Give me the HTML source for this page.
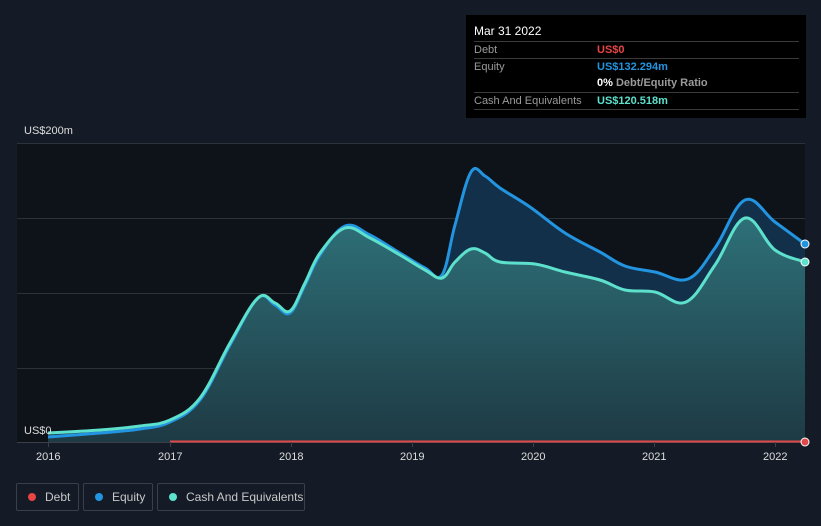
<!DOCTYPE html>
<html><head><meta charset="utf-8"><style>
body{margin:0;width:821px;height:526px;background:#151b26;font-family:"Liberation Sans",sans-serif;overflow:hidden;position:relative}
.tt{position:absolute;left:466px;top:15px;width:340px;height:103px;background:#000;}
.tt .h{position:absolute;left:8px;top:9px;color:#fff;font-size:12px}
.row{position:absolute;left:8px;width:325px;border-top:1px solid #3a3a3a;font-size:11px;color:#9a9a9a;height:16px;line-height:16px}
.row span{position:absolute;left:123px;font-weight:bold}
.leg{position:absolute;top:483px;height:26px;border:1px solid #3a3f48;border-radius:2px;color:#c8c8c8;font-size:12px;line-height:26px}
.leg i{position:absolute;left:11px;top:9px;width:8px;height:8px;border-radius:50%}
.ax{position:absolute;color:#ddd;font-size:11px}
</style></head><body>
<svg width="821" height="526" style="position:absolute;left:0;top:0">
<defs><linearGradient id="g" x1="0" y1="0" x2="0" y2="1"><stop offset="0" stop-color="#2e7078"/><stop offset="1" stop-color="#1e3a44"/></linearGradient></defs>
<rect x="17" y="143" width="788" height="299" fill="#0e1219"/>
<g stroke="#2d323a" stroke-width="1"><line x1="17" y1="143.5" x2="805" y2="143.5"/><line x1="17" y1="218.5" x2="805" y2="218.5"/><line x1="17" y1="293.5" x2="805" y2="293.5"/><line x1="17" y1="368.5" x2="805" y2="368.5"/></g>
<path id="ef" fill="#12304a"/>
<path id="cf" fill="url(#g)"/>
<path id="el" fill="none" stroke="#2394df" stroke-width="3" stroke-linejoin="round"/>
<path id="cl" fill="none" stroke="#5de0cc" stroke-width="3" stroke-linejoin="round"/>
<line x1="17" y1="442.5" x2="805" y2="442.5" stroke="#3a3f48"/>
<line x1="170" y1="441.5" x2="805" y2="441.5" stroke="#e04a4a" stroke-width="2"/>
<g stroke="#3a3f48"><line x1="48.5" y1="442" x2="48.5" y2="447"/><line x1="170.5" y1="442" x2="170.5" y2="447"/><line x1="291.5" y1="442" x2="291.5" y2="447"/><line x1="412.5" y1="442" x2="412.5" y2="447"/><line x1="533.5" y1="442" x2="533.5" y2="447"/><line x1="654.5" y1="442" x2="654.5" y2="447"/><line x1="775.5" y1="442" x2="775.5" y2="447"/></g>
<circle cx="805" cy="244" r="4" fill="#2394df" stroke="#fff" stroke-width="1"/>
<circle cx="805" cy="262" r="4" fill="#5de0cc" stroke="#fff" stroke-width="1"/>
<circle cx="805" cy="442" r="4" fill="#e04a4a" stroke="#fff" stroke-width="1"/>
</svg>
<script>
function sm(p){var d="M"+p[0][0]+","+p[0][1];for(var i=0;i<p.length-1;i++){var a=p[i-1]||p[i],b=p[i],c=p[i+1],e=p[i+2]||c;var t=0.18;d+=" C"+(b[0]+(c[0]-a[0])*t).toFixed(1)+","+(b[1]+(c[1]-a[1])*t).toFixed(1)+" "+(c[0]-(e[0]-b[0])*t).toFixed(1)+","+(c[1]-(e[1]-b[1])*t).toFixed(1)+" "+c[0]+","+c[1];}return d;}
var E=[[48,437],[100,433],[140,429],[170,422],[200,400],[230,345],[258,298],[275,305],[290,313],[305,285],[320,255],[345,226],[370,235],[400,253],[425,268],[442,275],[455,225],[471,172],[485,176],[500,188],[530,207],[565,233],[600,252],[625,266],[655,272],[688,279],[715,248],[745,200],[775,222],[805,244]];
var C=[[48,433],[100,430],[140,426],[170,420],[200,398],[230,343],[258,298],[275,303],[290,311],[305,283],[320,253],[345,228],[370,238],[400,255],[425,270],[442,278],[455,262],[471,249],[485,253],[500,262],[535,264],[565,272],[600,280],[625,290],[655,292],[686,302],[715,265],[745,218],[775,250],[805,262]];
var e=sm(E),c=sm(C);
document.getElementById('el').setAttribute('d',e);
document.getElementById('cl').setAttribute('d',c);
document.getElementById('ef').setAttribute('d',e+" L805,442 L48,442Z");
document.getElementById('cf').setAttribute('d',c+" L805,442 L48,442Z");
</script>
<div class="ax" style="left:24px;top:125px">US$200m</div>
<div class="ax" style="left:24px;top:425px">US$0</div>
<div class="ax" style="left:36px;top:451px">2016</div>
<div class="ax" style="left:158px;top:451px">2017</div>
<div class="ax" style="left:279px;top:451px">2018</div>
<div class="ax" style="left:400px;top:451px">2019</div>
<div class="ax" style="left:521px;top:451px">2020</div>
<div class="ax" style="left:642px;top:451px">2021</div>
<div class="ax" style="left:763px;top:451px">2022</div>
<div class="tt"><div class="h">Mar 31 2022</div>
<div class="row" style="top:26px">Debt<span style="color:#e84545">US$0</span></div>
<div class="row" style="top:43px">Equity<span style="color:#2394df">US$132.294m</span></div>
<div class="row" style="top:60px;border-top:none"><span style="color:#fff">0% <b style="color:#9a9a9a">Debt/Equity Ratio</b></span></div>
<div class="row" style="top:77px">Cash And Equivalents<span style="color:#5de0cc">US$120.518m</span></div>
<div class="row" style="top:94px;height:0"></div>
</div>
<div class="leg" style="left:16px;width:61px"><i style="background:#e84545"></i><span style="position:absolute;left:28px">Debt</span></div>
<div class="leg" style="left:83px;width:68px"><i style="background:#2394df"></i><span style="position:absolute;left:28px">Equity</span></div>
<div class="leg" style="left:157px;width:146px"><i style="background:#5de0cc"></i><span style="position:absolute;left:28px">Cash And Equivalents</span></div>
</body></html>
